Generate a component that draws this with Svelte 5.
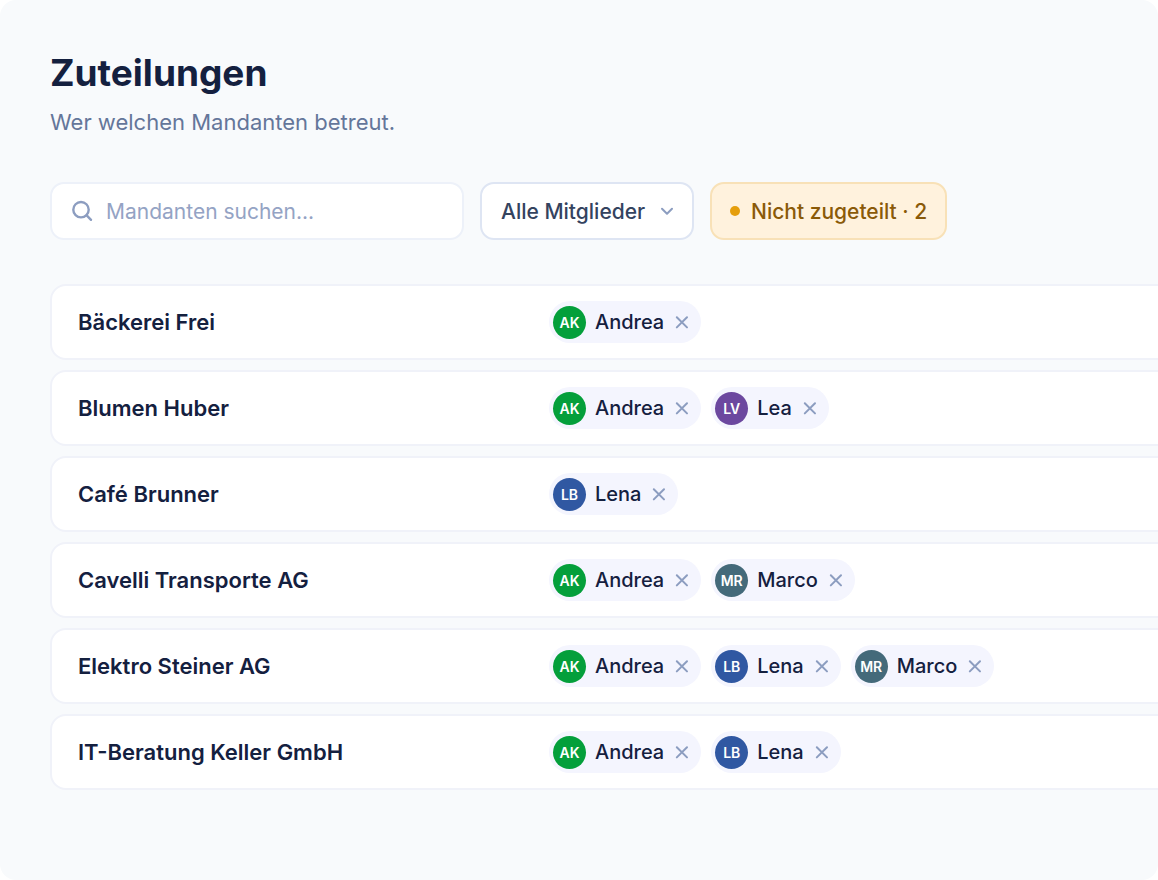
<script lang="ts">
  type Member = { id: string; name: string; initials: string; color: string };
  type Client = { name: string; members: string[] };

  const members: Member[] = [
    { id: "andrea", name: "Andrea", initials: "AK", color: "#049f3b" },
    { id: "lea", name: "Lea", initials: "LV", color: "#6c489f" },
    { id: "lena", name: "Lena", initials: "LB", color: "#3058a2" },
    { id: "marco", name: "Marco", initials: "MR", color: "#446a7a" },
  ];

  let clients: Client[] = [
    { name: "Bäckerei Frei", members: ["andrea"] },
    { name: "Blumen Huber", members: ["andrea", "lea"] },
    { name: "Café Brunner", members: ["lena"] },
    { name: "Cavelli Transporte AG", members: ["andrea", "marco"] },
    { name: "Elektro Steiner AG", members: ["andrea", "lena", "marco"] },
    { name: "IT-Beratung Keller GmbH", members: ["andrea", "lena"] },
  ];

  let search = "";
  let selected = "";

  const findMember = (id: string) => members.find((m) => m.id === id)!;

  const removeMember = (client: Client, id: string) => {
    client.members = client.members.filter((m) => m !== id);
    clients = clients;
  };

  $: visible = clients.filter(
    (c) =>
      c.name.toLowerCase().includes(search.toLowerCase()) &&
      (!selected || c.members.includes(selected))
  );
</script>

<main class="page">
  <h1>Zuteilungen</h1>
  <p class="subtitle">Wer welchen Mandanten betreut.</p>

  <div class="filters">
    <label class="search">
      <svg width="24" height="24" viewBox="0 0 24 24" aria-hidden="true">
        <circle cx="11" cy="10.7" r="7.7" />
        <path d="M16.7 16.4 L21 20.8" />
      </svg>
      <input
        type="text"
        bind:value={search}
        placeholder="Mandanten suchen..."
        aria-label="Mandanten suchen"
      />
    </label>

    <div class="dropdown">
      <select bind:value={selected} aria-label="Mitglied">
        <option value="">Alle Mitglieder</option>
        {#each members as member}
          <option value={member.id}>{member.name}</option>
        {/each}
      </select>
      <svg width="14" height="10" viewBox="0 0 14 10" aria-hidden="true">
        <path d="M2 2.8 L7 7.8 L12 2.8" />
      </svg>
    </div>

    <button class="unassigned" type="button">
      <span class="unassigned__dot"></span>
      Nicht zugeteilt · 2
    </button>
  </div>

  <ul class="clients">
    {#each visible as client (client.name)}
      <li class="client">
        <span class="client__name">{client.name}</span>
        <div class="client__members">
          {#each client.members.map(findMember) as member (member.id)}
            <span class="chip">
              <span class="chip__avatar" style="background: {member.color}">
                {member.initials}
              </span>
              <span class="chip__name">{member.name}</span>
              <button
                class="chip__remove"
                type="button"
                aria-label="{member.name} entfernen"
                on:click={() => removeMember(client, member.id)}
              >
                <svg width="14" height="14" viewBox="0 0 14 14" aria-hidden="true">
                  <path d="M1.8 2.2 L12 12.4 M12 2.2 L1.8 12.4" />
                </svg>
              </button>
            </span>
          {/each}
        </div>
      </li>
    {/each}
  </ul>
</main>

<style>
  :global(body) {
    background: #fff;
  }

  .page {
    box-sizing: border-box;
    min-height: 100vh;
    padding: 48px 0 48px 50px;
    overflow: hidden;
    border-radius: 16px;
    background: #f8fafc;
    color: #14203f;
    font-family: Inter, "Liberation Sans", sans-serif;
  }

  h1 {
    margin: 0;
    font-size: 37px;
    font-weight: 700;
    line-height: 50px;
  }

  .subtitle {
    margin: 8px 0 44px;
    color: #64769a;
    font-size: 22px;
    line-height: 32px;
  }

  .filters {
    display: flex;
    gap: 16px;
    height: 58px;
    margin-bottom: 44px;
  }

  .search,
  select,
  .unassigned {
    box-sizing: border-box;
    border-radius: 14px;
    font-family: inherit;
    font-size: 21px;
  }

  .search {
    display: flex;
    align-items: center;
    gap: 12px;
    flex: 0 1 414px;
    min-width: 0;
    padding: 0 18px;
    border: 2px solid #edf1f9;
    background: #fff;
  }

  svg {
    flex: none;
    fill: none;
    stroke: #8c9dc0;
    stroke-width: 2;
    stroke-linecap: round;
    stroke-linejoin: round;
  }

  .search svg {
    stroke-width: 2.4;
  }

  input {
    flex: 1;
    min-width: 0;
    padding: 0;
    border: 0;
    outline: 0;
    background: none;
    color: #14203f;
    font: inherit;
  }

  input::placeholder {
    color: #94a3c4;
    opacity: 1;
  }

  .dropdown {
    display: grid;
    align-items: center;
  }

  .dropdown > * {
    grid-area: 1 / 1;
  }

  .dropdown svg {
    justify-self: end;
    margin-right: 20px;
    pointer-events: none;
  }

  select {
    height: 100%;
    padding: 0 46px 0 19px;
    border: 2px solid #dee5f3;
    background: #fff;
    color: #34435f;
    font-weight: 500;
    appearance: none;
  }

  .unassigned {
    display: flex;
    align-items: center;
    gap: 11px;
    padding: 0 18px;
    border: 2px solid #f8e1b7;
    background: #fff2dd;
    color: #8a5a08;
    font-weight: 500;
    white-space: nowrap;
  }

  .unassigned__dot {
    width: 10px;
    height: 10px;
    border-radius: 50%;
    background: #e59e0b;
  }

  .clients {
    display: flex;
    flex-direction: column;
    gap: 10px;
    margin: 0 -24px 0 0;
    padding: 0;
    list-style: none;
  }

  .client {
    display: grid;
    grid-template-columns: 471px 1fr;
    align-items: center;
    box-sizing: border-box;
    min-height: 76px;
    padding: 0 26px;
    border: 2px solid #f0f2f9;
    border-radius: 16px;
    background: #fff;
  }

  .client__name {
    font-size: 22px;
    font-weight: 600;
  }

  .client__members {
    display: flex;
    gap: 10px;
  }

  .chip {
    display: flex;
    align-items: center;
    box-sizing: border-box;
    height: 42px;
    padding: 0 12px 0 4px;
    border-radius: 21px;
    background: #f4f5fe;
  }

  .chip__avatar {
    display: grid;
    place-items: center;
    width: 33px;
    height: 33px;
    margin-right: 9px;
    border-radius: 50%;
    color: #fff;
    font-size: 14px;
    font-weight: 600;
  }

  .chip__name {
    font-size: 20px;
    font-weight: 500;
  }

  .chip__remove {
    display: flex;
    margin-left: 11px;
    padding: 0;
    border: 0;
    background: none;
    cursor: pointer;
  }
</style>
